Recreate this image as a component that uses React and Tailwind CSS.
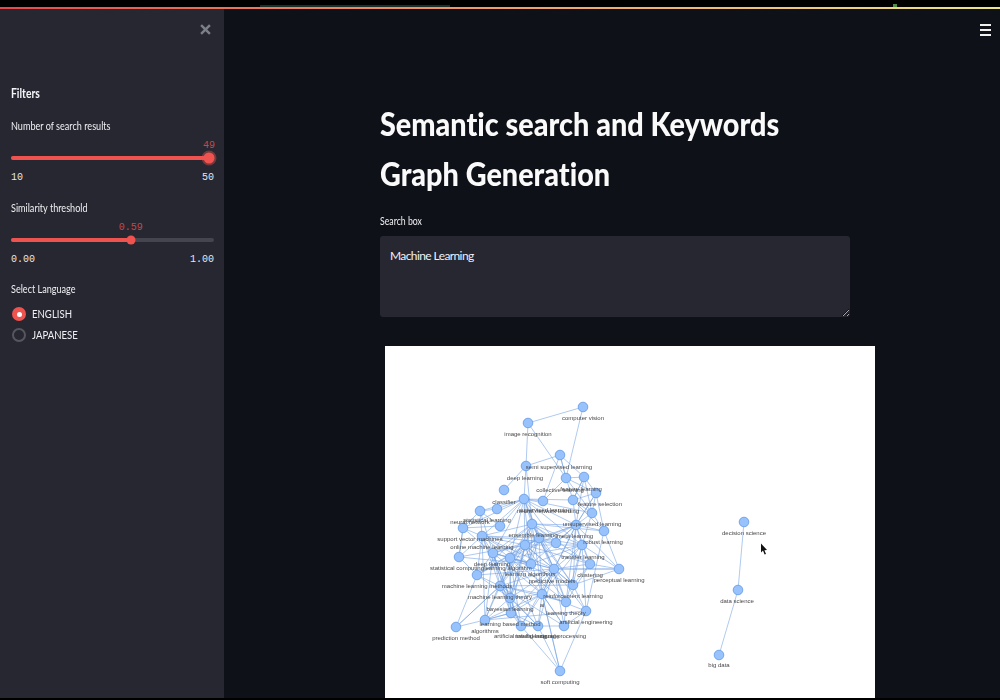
import React from "react";

const nodes = [
  [583, 407], [528, 423], [560, 455], [526, 466], [566, 478], [584, 477], [504, 490], [596, 493],
  [524, 499], [543, 501], [573, 500], [480, 511], [497, 509], [592, 513], [463, 528], [500, 526],
  [532, 524], [576, 525], [604, 531], [482, 536], [539, 538], [556, 543], [525, 545], [582, 545],
  [459, 557], [493, 553], [510, 558], [531, 564], [554, 569], [590, 564], [619, 569], [477, 575],
  [500, 586], [573, 585], [542, 594], [510, 598], [566, 602], [586, 611], [511, 613], [485, 620],
  [456, 627], [521, 626], [538, 626], [564, 626], [560, 671],
  [744, 522], [738, 590], [719, 655],
];

// edges that leave the dense middle of the graph
const outerEdges = [
  [0, 1], [1, 3], [1, 4], [0, 4], [2, 4], [2, 9], [3, 8], [3, 6], [3, 16], [5, 10], [5, 17], [7, 17],
  [30, 28], [30, 18], [30, 33], [40, 39], [40, 31], [40, 32], [44, 41], [44, 42], [44, 37], [44, 34],
  [39, 38], [39, 37], [37, 33], [37, 18], [24, 14], [24, 27], [24, 31], [43, 36], [43, 34], [19, 39],
  [45, 46], [46, 47],
];

const edges = [...outerEdges];
for (let i = 2; i < 45; i++) {
  for (let j = i + 1; j < 45; j++) {
    const dx = nodes[i][0] - nodes[j][0];
    const dy = nodes[i][1] - nodes[j][1];
    const d = Math.hypot(dx, dy);
    const nearMiddle = Math.hypot(nodes[i][0] - 535, nodes[i][1] - 545) < 55;
    if (d < (nearMiddle ? 80 : 45) && (i * 7 + j * 3) % 3 !== 0) edges.push([i, j]);
  }
}

const labels = [
  ["computer vision", 583, 420], ["image recognition", 528, 436], ["semi supervised learning", 559, 469],
  ["deep learning", 525, 480], ["feature learning", 581, 491], ["collective learning", 560, 492],
  ["classifier", 504, 504], ["feature selection", 600, 506], ["neural network learning", 548, 513],
  ["supervised learning", 545, 512], ["neural network", 470, 524], ["statistical learning", 487, 522],
  ["unsupervised learning", 592, 526], ["support vector machines", 470, 541], ["ensemble learning", 533, 537],
  ["meta learning", 575, 538], ["robust learning", 603, 544], ["online machine learning", 482, 549],
  ["statistical computing", 457, 570], ["learning algorithm", 508, 570], ["deep learning", 492, 566],
  ["transfer learning", 583, 559], ["learning algorithms", 530, 576], ["clustering", 590, 577],
  ["perceptual learning", 619, 582], ["predictive models", 552, 583], ["machine learning methods", 477, 588],
  ["machine learning theory", 500, 599], ["reinforcement learning", 573, 598], ["ai", 542, 607],
  ["bayesian learning", 510, 611], ["learning theory", 566, 615], ["learning based method", 510, 626],
  ["artificial engineering", 586, 624], ["algorithms", 485, 633], ["prediction method", 456, 640],
  ["artificial intelligence", 520, 638], ["natural language", 537, 638], ["signal processing", 563, 638],
  ["soft computing", 560, 684], ["decision science", 744, 535], ["data science", 737, 603], ["big data", 719, 667],
];

function KeywordGraph() {
  return (
    <svg viewBox="385 346 490 352" className="w-full h-full blur-[0.5px]">
      {edges.map(([a, b], i) => (
        <line
          key={i}
          x1={nodes[a][0]}
          y1={nodes[a][1]}
          x2={nodes[b][0]}
          y2={nodes[b][1]}
          stroke="#6f9ee2"
          strokeWidth="1"
          opacity="0.55"
        />
      ))}
      {nodes.map(([x, y], i) => (
        <circle key={i} cx={x} cy={y} r="4.8" fill="#97c2fc" stroke="#6b9fe8" strokeWidth="0.9" />
      ))}
      {labels.map(([text, x, y], i) => (
        <text
          key={i}
          x={x}
          y={y}
          textAnchor="middle"
          fontSize="6"
          fill="#484848"
          fontFamily="'Liberation Sans', sans-serif"
        >
          {text}
        </text>
      ))}
      {/* mouse pointer */}
      <path d="M761 543.5 L761 552.5 L763 550.6 L764.6 554.5 L766 553.9 L764.4 550.2 L767 550 Z" fill="#111" />
    </svg>
  );
}

function Slider({ label, value, min, max, percent, big }) {
  return (
    <div>
      <p className="text-[11.5px] leading-4 text-[#f0f0f4] origin-left scale-x-[0.79]">{label}</p>
      <div className="relative h-[4px] mt-[22px] rounded-full bg-[#44454e]">
        <div className="h-full rounded-full bg-[#ee5350]" style={{ width: `${percent}%` }} />
        <div
          className={
            big
              ? "absolute top-1/2 w-[11px] h-[11px] -translate-x-1/2 -translate-y-1/2 rounded-full bg-[#ee5350] ring-2 ring-[#ee5350]/40"
              : "absolute top-1/2 w-[9px] h-[9px] -translate-x-1/2 -translate-y-1/2 rounded-full bg-[#ee5350]"
          }
          style={{ left: `${percent}%` }}
        />
        <span
          className="absolute -top-[18px] -translate-x-1/2 font-['Liberation_Mono',monospace] text-[10px] leading-4 text-[#c04a4c]"
          style={{ left: `${percent}%` }}
        >
          {value}
        </span>
      </div>
      <div className="flex justify-between mt-[10px] font-['Liberation_Mono',monospace] text-[10px] leading-4 text-[#e8e8ec]">
        <span>{min}</span>
        <span>{max}</span>
      </div>
    </div>
  );
}

export default function App() {
  return (
    <div className="relative flex flex-col h-[700px] overflow-hidden bg-black font-['Lato',sans-serif]">
      <div className="h-[7px] shrink-0 bg-black" />
      <div className="absolute top-[5px] left-[260px] w-[190px] h-[2px] bg-[#17302a]" />
      <div className="absolute top-[4px] left-[893px] w-[4px] h-[3px] bg-[#4f8a4a]" />
      <div className="h-[2px] shrink-0 bg-gradient-to-r from-[#e5484d] to-[#ece58a]" />

      <div className="flex flex-1 min-h-0">
        {/* sidebar */}
        <aside className="w-[224px] shrink-0 bg-[#262730] pl-[11px] pr-[10px] relative">
          <svg viewBox="0 0 10 10" className="absolute top-[15px] left-[200px] w-[11px] h-[11px]">
            <path d="M1 1 L9 9 M9 1 L1 9" stroke="#7d7f88" strokeWidth="2.2" />
          </svg>

          <h2 className="mt-[76px] text-[12.5px] leading-[18px] font-bold text-[#f5f5f8] origin-left scale-x-[0.83]">
            Filters
          </h2>

          <div className="mt-[15px] flex flex-col gap-[14px]">
            <Slider label="Number of search results" value="49" min="10" max="50" percent={97.5} big />
            <Slider label="Similarity threshold" value="0.59" min="0.00" max="1.00" percent={59} />
          </div>

          <p className="mt-[13px] text-[11.5px] leading-4 text-[#f0f0f4] origin-left scale-x-[0.79]">Select Language</p>
          <div className="mt-[10px] flex flex-col gap-[7px] ml-[1px]">
            <div className="flex items-center gap-[6px] h-[14px]">
              <span className="flex items-center justify-center w-[14px] h-[14px] rounded-full bg-[#ee5350]">
                <span className="w-[5px] h-[5px] rounded-full bg-white" />
              </span>
              <span className="text-[12px] text-[#f0f0f4] origin-left scale-x-[0.8]">ENGLISH</span>
            </div>
            <div className="flex items-center gap-[6px] h-[14px]">
              <span className="w-[14px] h-[14px] rounded-full border-2 border-[#55565e]" />
              <span className="text-[12px] text-[#f0f0f4] origin-left scale-x-[0.8]">JAPANESE</span>
            </div>
          </div>
        </aside>

        {/* main */}
        <main className="relative flex-1 min-w-0 bg-[#0e1117] pl-[156px] overflow-hidden">
          <div className="absolute top-[15px] right-[9px] flex flex-col gap-[3px] w-[11px]">
            <span className="h-[2px] bg-[#f0f0f0]" />
            <span className="h-[2px] bg-[#f0f0f0]" />
            <span className="h-[2px] bg-[#f0f0f0]" />
          </div>

          <h1 className="mt-[90px] w-[470px] text-[32px] leading-[50px] font-black text-[#fafafa] origin-left scale-x-[0.9] [font-variant-ligatures:none]">
            Semantic search and Keywords Graph Generation
          </h1>

          <label className="block mt-[14px] text-[11.5px] leading-4 text-[#f0f0f4] origin-left scale-x-[0.76]">
            Search box
          </label>
          <textarea
            defaultValue="Machine Learning"
            className="block mt-[7px] w-[470px] h-[81px] rounded-[3px] bg-[#262730] px-[10px] pt-[11px] pb-[10px] text-[12px] leading-[18px] tracking-[-0.6px] text-[#f0f0f4] outline-none"
          />

          <div className="mt-[29px] ml-[5px] w-[490px] h-[352px] bg-white">
            <KeywordGraph />
          </div>
        </main>
      </div>

      <div className="h-[2px] shrink-0 bg-black" />
    </div>
  );
}
